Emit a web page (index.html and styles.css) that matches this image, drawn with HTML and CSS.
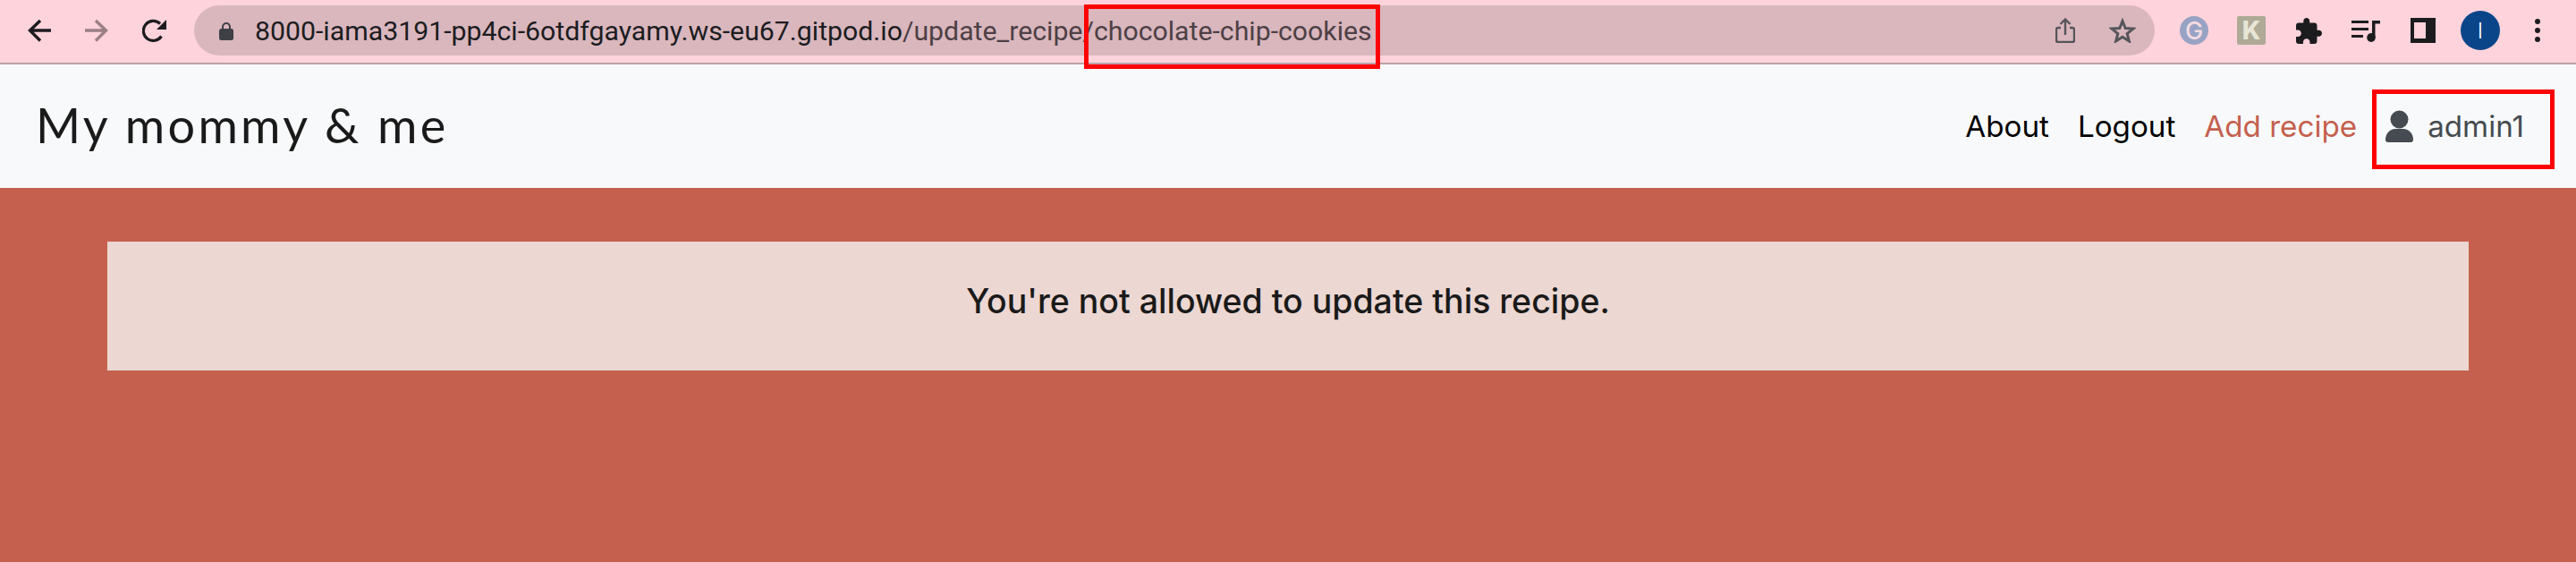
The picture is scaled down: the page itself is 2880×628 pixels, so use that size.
FILE: index.html
```html
<!DOCTYPE html>
<html lang="en">
  <head>
    <meta charset="UTF-8" />
    <title>My mommy &amp; me</title>
    <link rel="stylesheet" href="styles.css">
  </head>
  <body>
    <div class="toolbar">
      <svg class="tool-icon nav-back" viewBox="0 0 26 26" fill="none" stroke="#1c1c1f" stroke-width="3.4">
        <path d="M26 13H3M14 2 2.5 13 14 24.500" />
      </svg>
      <svg class="tool-icon nav-forward" viewBox="0 0 26 26" fill="none" stroke="#9b7f86" stroke-width="3.4">
        <path d="M0 13h23M12 2l11.500 11L12 24.500" />
      </svg>
      <svg class="tool-icon nav-reload" viewBox="0 0 28 26" fill="none">
        <path d="M21.500 19.500A11 11 0 1 1 20 5.500" stroke="#1c1c1f" stroke-width="3.200" />
        <path d="M27 1v11H16z" fill="#1c1c1f" />
      </svg>

      <div class="omnibox">
        <svg class="lock" viewBox="0 0 16 21">
          <path d="M4 9V6a4 4 0 0 1 8 0v3" fill="none" stroke="#3f3f46" stroke-width="2" />
          <rect y="8" width="16" height="13" rx="2.500" fill="#3f3f46" />
        </svg>
        <div class="url"><span class="url-host">8000-iama3191-pp4ci-6otdfgayamy.ws-eu67.gitpod.io</span>/update_recipe/chocolate-chip-cookies</div>
        <svg class="share" viewBox="0 0 22 28" fill="none" stroke="#55555a" stroke-width="2.400">
          <path d="M6 11H3a2 2 0 0 0-2 2v12a2 2 0 0 0 2 2h16a2 2 0 0 0 2-2V13a2 2 0 0 0-2-2h-3" />
          <path d="M11 19V2M5.500 7 11 1.500 16.500 7" />
        </svg>
        <svg class="star" viewBox="0 0 30 28" fill="none" stroke="#55555a" stroke-width="3">
          <path d="M15 3.500 18.200 11.500l8.800.6-6.800 5.500 2.200 8.400L15 21.300 7.600 26l2.200-8.400L3 12.100l8.800-.6z" />
        </svg>
      </div>

      <div class="ext ext-g">G</div>
      <div class="ext ext-k">K</div>
      <svg class="puzzle" viewBox="2 1 21 21">
        <path fill="#1c1c1f" d="M20.500 11H19V7c0-1.100-.9-2-2-2h-4V3.500C13 2.120 11.880 1 10.500 1S8 2.120 8 3.500V5H4c-1.100 0-1.990.9-1.990 2v3.800H3.500c1.490 0 2.700 1.210 2.700 2.700s-1.210 2.700-2.700 2.700H2V20c0 1.100.9 2 2 2h3.800v-1.500c0-1.490 1.210-2.700 2.700-2.700 1.490 0 2.700 1.210 2.700 2.700V22H17c1.100 0 2-.9 2-2v-4h1.500c1.380 0 2.500-1.120 2.500-2.500S21.880 11 20.500 11z" />
      </svg>
      <svg class="music" viewBox="0 0 32 25" fill="#1c1c1f">
        <rect y="1" width="19" height="3" />
        <rect y="9" width="19" height="3" />
        <rect y="17" width="13" height="3" />
        <path d="M23 1h9v3.500h-5.500V20h-3.500z" />
        <ellipse cx="22" cy="20" rx="4.800" ry="5" />
      </svg>
      <div class="side-panel"></div>
      <div class="avatar">I</div>
      <div class="dots"><span></span><span></span><span></span></div>
    </div>

    <nav class="navbar">
      <a class="brand" href="#">My mommy &amp; me</a>
      <div class="nav-links">
        <a href="#">About</a>
        <a href="#">Logout</a>
        <a class="link-add" href="#">Add recipe</a>
        <a class="link-user" href="#">
          <svg class="user-icon" viewBox="0 0 31 36" fill="#454b50">
            <circle cx="15.500" cy="10.500" r="10" />
            <path d="M0 33c0-7 5-12 11-12h9c6 0 11 5 11 12 0 2-1 3-3 3H3c-2 0-3-1-3-3z" />
          </svg>
          admin1
        </a>
      </div>
    </nav>

    <main class="content">
      <div class="message">You're not allowed to update this recipe.</div>
    </main>

    <!-- red highlight boxes drawn over the screenshot -->
    <div class="mark mark-url"></div>
    <div class="mark mark-user"></div>
  </body>
</html>
```

FILE: styles.css
```css
* {
  box-sizing: border-box;
}

html,
body {
  height: 100%;
}

body {
  margin: 0;
  font-family: "Inter", "Liberation Sans", sans-serif;
  background-color: #c4604d;
  overflow: hidden;
  position: relative;
}

a {
  text-decoration: none;
  color: inherit;
}

/* browser bar */
.toolbar {
  height: 72px;
  display: flex;
  align-items: center;
  padding: 0 0 2px 31px;
  background-color: #ffd3dc;
  border-bottom: 2px solid #bca3aa;
}

.tool-icon {
  width: 26px;
  height: 26px;
  flex: none;
}

.nav-forward {
  margin-left: 38px;
}

.nav-reload {
  width: 28px;
  margin-left: 38px;
}

.omnibox {
  width: 2192px;
  height: 56px;
  margin-left: 30px;
  padding: 0 21px 0 28px;
  display: flex;
  align-items: center;
  background-color: #d9b7bd;
  border-radius: 28px;
  flex: none;
}

.lock {
  width: 16px;
  height: 21px;
  flex: none;
}

.url {
  margin-left: 24px;
  font-family: "Roboto", "Liberation Sans", sans-serif;
  font-size: 30.25px;
  color: #4d4045;
  white-space: nowrap;
}

.url-host {
  color: #1c1c1f;
}

.share {
  width: 22px;
  height: 28px;
  margin-left: auto;
  flex: none;
}

.star {
  width: 30px;
  height: 28px;
  margin-left: 38px;
  flex: none;
}

.ext {
  width: 32px;
  height: 32px;
  display: flex;
  align-items: center;
  justify-content: center;
  flex: none;
}

.ext-g {
  margin-left: 28px;
  border-radius: 50%;
  background-color: #98a3c4;
  color: #f3dbe2;
  font-size: 27px;
  font-weight: 500;
}

.ext-k {
  margin-left: 32px;
  border-radius: 2px;
  background-color: #aeaa97;
  color: #e8e5d5;
  font-size: 28px;
  font-weight: 800;
}

.puzzle {
  width: 29px;
  height: 29px;
  margin-left: 34px;
  flex: none;
}

.music {
  width: 32px;
  height: 25px;
  margin-left: 33px;
  flex: none;
}

.side-panel {
  width: 28px;
  height: 28px;
  margin-left: 34px;
  border: 5px solid #1c1c1f;
  border-left-width: 4px;
  border-right-width: 11px;
  flex: none;
}

.avatar {
  width: 44px;
  height: 44px;
  margin-left: 28px;
  border-radius: 50%;
  background-color: #0a4589;
  color: #ffffff;
  font-size: 24px;
  font-weight: 300;
  display: flex;
  align-items: center;
  justify-content: center;
  flex: none;
}

.dots {
  margin-left: 39px;
  display: flex;
  flex-direction: column;
  gap: 4px;
}

.dots span {
  width: 6px;
  height: 6px;
  border-radius: 50%;
  background-color: #1c1c1f;
}

/* site header */
.navbar {
  height: 138px;
  display: flex;
  align-items: center;
  justify-content: space-between;
  padding: 0 58px 0 40px;
  background-color: #f8f9fa;
}

.brand {
  margin-bottom: 3px;
  font-family: "Lato", sans-serif;
  font-size: 54px;
  letter-spacing: 3.3px;
  color: #1a1a1a;
}

.nav-links {
  display: flex;
  align-items: center;
  gap: 32px;
  font-size: 33.2px;
  color: #000000;
}

.link-add {
  color: #c4604d;
}

.link-user {
  display: flex;
  align-items: center;
  gap: 16px;
  color: #454b50;
}

.user-icon {
  width: 31px;
  height: 36px;
}

/* page body */
.content {
  padding: 60px 120px 0;
}

.message {
  height: 144px;
  padding-bottom: 12px;
  display: flex;
  align-items: center;
  justify-content: center;
  background-color: #ecd7d2;
  color: #1a1a1a;
  font-size: 37.5px;
  font-weight: 500;
}

/* red boxes */
.mark {
  position: absolute;
  border: 5px solid #ff0000;
}

.mark-url {
  left: 1212px;
  top: 5px;
  width: 331px;
  height: 72px;
}

.mark-user {
  left: 2652px;
  top: 100px;
  width: 204px;
  height: 89px;
}
```
